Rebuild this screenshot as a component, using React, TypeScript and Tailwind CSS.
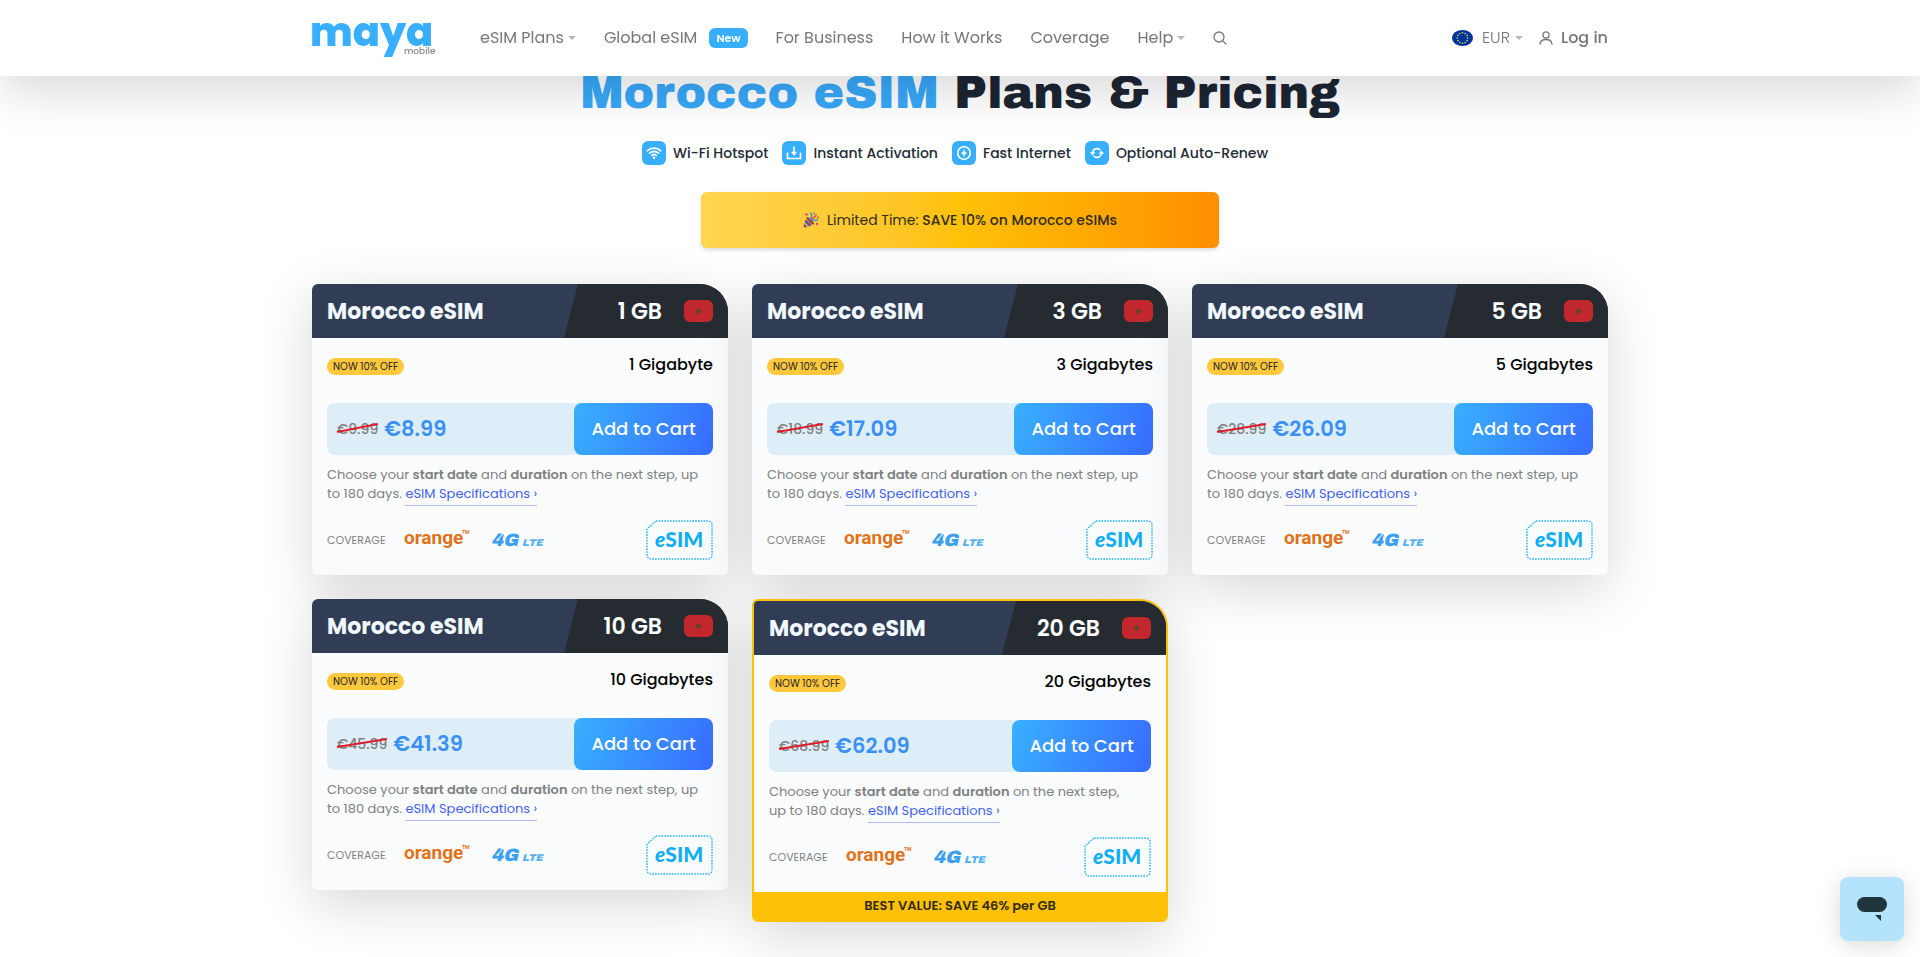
import type { ReactNode } from "react";

type Plan = {
  size: string;
  amount: string;
  oldPrice: string;
  price: string;
  best?: string;
};

const plans: Plan[] = [
  { size: "1 GB", amount: "1 Gigabyte", oldPrice: "€9.99", price: "€8.99" },
  { size: "3 GB", amount: "3 Gigabytes", oldPrice: "€18.99", price: "€17.09" },
  { size: "5 GB", amount: "5 Gigabytes", oldPrice: "€28.99", price: "€26.09" },
  { size: "10 GB", amount: "10 Gigabytes", oldPrice: "€45.99", price: "€41.39" },
  {
    size: "20 GB",
    amount: "20 Gigabytes",
    oldPrice: "€68.99",
    price: "€62.09",
    best: "BEST VALUE: SAVE 46% per GB",
  },
];

function Caret() {
  return (
    <svg width="8" height="4" viewBox="0 0 8 4" className="fill-[#b5b5b5]" aria-hidden="true">
      <path d="M0 0h8L4 4z" />
    </svg>
  );
}

function Logo() {
  return (
    <a href="#" className="block shrink-0" aria-label="Maya Mobile">
      <svg width="120" height="44" viewBox="0 0 120 44" className="overflow-visible">
        <text x="-2" y="30" fontSize="40" fontWeight="800" fill="#38aeff">
          maya
        </text>
        <text x="92" y="38" fontSize="9" fontWeight="500" fill="#8a8a8a">
          mobile
        </text>
      </svg>
    </a>
  );
}

function EuFlag() {
  const stars = Array.from({ length: 12 }, (_, i) => (i * Math.PI) / 6);

  return (
    <svg width="21" height="16" viewBox="0 0 21 16" aria-hidden="true">
      <ellipse cx="10.5" cy="8" rx="10.5" ry="8" fill="#003399" />
      {stars.map((a) => (
        <circle key={a} cx={10.5 + 5.2 * Math.sin(a)} cy={8 - 5.2 * Math.cos(a)} r="0.8" fill="#e9dc5a" />
      ))}
    </svg>
  );
}

function Header() {
  return (
    <header className="fixed inset-x-0 top-0 z-10 bg-white shadow-[0_16px_48px_rgba(0,0,0,0.15)]">
      <div className="mx-auto flex h-[76px] max-w-[1296px] items-center text-base text-[#777]">
        <Logo />
        <nav className="ml-12 flex items-center gap-7 whitespace-nowrap">
          <a href="#" className="flex items-center gap-1">
            eSIM Plans <Caret />
          </a>
          <a href="#" className="flex items-center gap-3">
            Global eSIM
            <span className="rounded-md bg-[#38aeff] px-[7px] text-[11px] leading-5 font-semibold text-white">New</span>
          </a>
          <a href="#">For Business</a>
          <a href="#">How it Works</a>
          <a href="#">Coverage</a>
          <a href="#" className="flex items-center gap-1">
            Help <Caret />
          </a>
          <button type="button" aria-label="Search">
            <svg width="14" height="14" viewBox="0 0 14 14" fill="none" stroke="currentColor" strokeWidth="1.3">
              <circle cx="6" cy="6" r="5" />
              <path d="M9.6 9.6L13 13" strokeLinecap="round" />
            </svg>
          </button>
        </nav>
        <div className="ml-auto flex items-center gap-4 whitespace-nowrap">
          <button type="button" className="flex items-center gap-[5px]">
            <EuFlag />
            <span className="ml-1 font-light">EUR</span>
            <Caret />
          </button>
          <a href="#" className="flex items-center gap-2 font-medium">
            <svg width="14" height="14" viewBox="0 0 14 14" fill="none" stroke="currentColor" strokeWidth="1.3">
              <circle cx="7" cy="4" r="3.1" />
              <path d="M1 13.2c.3-3 2.700-4.700 6-4.700s5.700 1.700 6 4.700" strokeLinecap="round" />
            </svg>
            Log in
          </a>
        </div>
      </div>
    </header>
  );
}

function Feature({ label, children }: { label: string; children: ReactNode }) {
  return (
    <li className="flex items-center gap-[7px]">
      <span className="rounded-md bg-[#38aeff] p-1">
        <svg
          width="16"
          height="16"
          viewBox="0 0 16 16"
          fill="none"
          stroke="#fff"
          strokeWidth="1.6"
          strokeLinecap="round"
          aria-hidden="true"
        >
          {children}
        </svg>
      </span>
      {label}
    </li>
  );
}

function Features() {
  return (
    <ul className="mt-5 flex flex-wrap justify-center gap-x-[14px] gap-y-2 pr-[10px] text-sm leading-6 font-medium text-[#212a35]">
      <Feature label="Wi-Fi Hotspot">
        <path d="M1.200 5.800c3.800-3.600 9.800-3.600 13.600 0M3.500 8.200c2.500-2.400 6.500-2.400 9 0M5.800 10.500c1.200-1.200 3.200-1.200 4.400 0" />
        <circle cx="8" cy="12.800" r="1.300" fill="#fff" stroke="none" />
      </Feature>
      <Feature label="Instant Activation">
        <path d="M1.500 8v5.500h13V8" />
        <path d="M8 2v7" />
        <path d="M4.800 6.800h6.400L8 10.800z" fill="#fff" stroke="none" />
      </Feature>
      <Feature label="Fast Internet">
        <circle cx="8" cy="8" r="6.300" />
        <path d="M8.800 3.800L5 9h2.400l-.4 3.400L11 7.200H8.500z" fill="#fff" stroke="none" />
      </Feature>
      <Feature label="Optional Auto-Renew">
        <path d="M3.600 8A4.400 4.400 0 0 1 10.800 4.700M12.400 8A4.400 4.400 0 0 1 5.200 11.300" />
        <path d="M.9 7.300h5.400L3.600 10.600zM9.700 8.700h5.400L12.400 5.400z" fill="#fff" stroke="none" />
      </Feature>
    </ul>
  );
}

function PartyPopper() {
  return (
    <svg width="16" height="16" viewBox="0 0 16 16" aria-hidden="true">
      <path d="M3.500 5l7.500 7.500L1.600 15.700C.8 16 0 15.200.3 14.400z" fill="#f0a63a" />
      <path d="M2.700 7.600l5.800 5.700-2.400.9-4.400-4.300zM1.200 11.900l2.900 2.900-2 .7L.6 13.800z" fill="#5b4bb0" />
      <ellipse cx="7.300" cy="8.800" rx="1.700" ry="5" transform="rotate(-45 7.300 8.800)" fill="#8a5a3e" />
      <path d="M7 7.500c2-1 1.800-4 .8-7M9 9.500c1-2.300 3.500-1.800 6.200-1.200" fill="none" stroke="#3f8fe0" strokeWidth="1.500" />
      <path d="M8.500 8c1-3 3-1.500 5-5.500" fill="none" stroke="#e0475a" strokeWidth="1.500" />
      <circle cx="3.500" cy="2.500" r="1.200" fill="#e0475a" />
      <circle cx="14" cy="12" r="1.200" fill="#d8448e" />
      <circle cx="11.200" cy="1.500" r="1.100" fill="#3fa9a0" />
      <circle cx="14.800" cy="5.500" r="1" fill="#e0475a" />
    </svg>
  );
}

function MoroccoFlag() {
  return (
    <svg width="29" height="22" viewBox="0 0 29 22" role="img" aria-label="Morocco">
      <rect width="29" height="22" rx="6" fill="#c1272d" />
      <path d="M14.500 7.500l.9 2.600h2.700l-2.200 1.600.8 2.600-2.200-1.600-2.200 1.600.8-2.600-2.200-1.600h2.700z" fill="#4f4a24" />
    </svg>
  );
}

function OrangeLogo() {
  return (
    <svg width="66" height="24" viewBox="0 0 66 24" className="overflow-visible font-['Roboto',sans-serif] font-bold">
      <text x="0" y="16" fontSize="19" fill="#e0731a">
        orange
      </text>
      <text x="58" y="6" fontSize="5" fill="#e0731a">
        TM
      </text>
    </svg>
  );
}

function LteLogo() {
  return (
    <svg
      width="54"
      height="16"
      viewBox="0 0 54 16"
      className="overflow-visible font-['Archivo_Black','DejaVu_Sans',sans-serif] italic"
    >
      <text x="1" y="14" fontSize="18" fill="#3d9fee">
        4G
      </text>
      <text x="32" y="14" fontSize="10" fill="#55b0f4">
        LTE
      </text>
    </svg>
  );
}

function EsimLogo() {
  return (
    <svg width="67" height="40" viewBox="0 0 67 40" className="font-['Lato',sans-serif]">
      <path
        d="M10 1h52a4 4 0 0 1 4 4v30a4 4 0 0 1-4 4H5a4 4 0 0 1-4-4V9z"
        fill="none"
        stroke="#25b2f5"
        strokeWidth="1.400"
        strokeDasharray="1.600 1.200"
      />
      <text x="9" y="27" fontSize="21" fontWeight="900" fill="#0fadf5">
        <tspan fontStyle="italic">e</tspan>SIM
      </text>
    </svg>
  );
}

function PlanCard({ plan }: { plan: Plan }) {
  return (
    <article
      className={`overflow-hidden rounded-md rounded-tr-[28px] bg-[#fafcfe] shadow-[0_14px_56px_rgba(0,0,0,0.16)] ${
        plan.best ? "border-2 border-[#ffc107]" : ""
      }`}
    >
      <div className="relative flex h-[54px] items-center justify-between bg-[#303d55] px-[15px] text-[22px] font-bold">
        <svg className="absolute inset-y-0 right-0 h-full w-[164px]" viewBox="0 0 164 54" preserveAspectRatio="none">
          <path d="M14 0h150v54H0z" fill="#262b32" />
        </svg>
        <h2 className="text-[#f1f8ff]">Morocco eSIM</h2>
        <div className="relative flex items-center gap-[22px] font-semibold text-white">
          {plan.size}
          <MoroccoFlag />
        </div>
      </div>
      <div className="px-[15px] pt-4 pb-[15px]">
        <div className="flex items-start justify-between">
          <span className="mt-1 rounded-full bg-[#ffc83d] px-[6px] text-[10px] leading-[17px] text-[#212529]">
            NOW 10% OFF
          </span>
          <p className="text-base leading-[22px] font-medium text-black">{plan.amount}</p>
        </div>
        <div className="mt-[27px] flex h-[52px] items-center rounded-lg bg-[#deeef8] pl-[10px]">
          <span className="relative text-sm font-medium text-[#808080]">
            <s className="no-underline">{plan.oldPrice}</s>
            <svg
              className="absolute inset-0 h-full w-full"
              viewBox="0 0 42 20"
              preserveAspectRatio="none"
              aria-hidden="true"
            >
              <path d="M0 13L42 5" stroke="#e01b2a" strokeWidth="2" />
            </svg>
          </span>
          <strong className="ml-[6px] text-[21px] font-semibold text-[#3a90f5]">{plan.price}</strong>
          <button
            type="button"
            className="ml-auto h-full w-[139px] cursor-pointer rounded-lg bg-linear-[110deg] from-[#38b0ff] to-[#386cff] text-lg font-medium text-white"
          >
            Add to Cart
          </button>
        </div>
        <p className="mt-[10px] pr-[14px] text-[13px] leading-[19px] text-[#808080]">
          Choose your <b className="font-semibold">start date</b> and <b className="font-semibold">duration</b> on the
          next step, up to 180 days.{" "}
          <a href="#" className="border-b border-[#b3b5f0] pb-[2px] text-[#4361ee]">
            eSIM Specifications ›
          </a>
        </p>
        <div className="mt-[17px] flex items-center">
          <span className="text-[11px] text-[#808080]">COVERAGE</span>
          <span className="ml-[18px]">
            <OrangeLogo />
          </span>
          <span className="ml-5">
            <LteLogo />
          </span>
          <span className="ml-auto">
            <EsimLogo />
          </span>
        </div>
      </div>
      {plan.best && (
        <p className="bg-[#ffc107] text-center text-[13px] leading-[28px] font-semibold text-[#332d10]">{plan.best}</p>
      )}
    </article>
  );
}

export default function App() {
  return (
    <div className="min-h-screen overflow-hidden bg-white font-['Poppins','Inter',sans-serif]">
      <Header />
      <main className="mx-auto max-w-[1296px] pt-[65px] pb-9">
        <h1 className="text-center font-['Archivo_Black','Inter',sans-serif] text-[46px] leading-[56px] font-normal text-[#1c2533]">
          <span className="text-[#38a8f8]">Morocco eSIM</span> Plans &amp; Pricing
        </h1>
        <Features />
        <div className="mx-auto mt-[27px] flex h-14 max-w-[518px] items-center justify-center gap-2 rounded-md bg-linear-to-r from-[#ffd54f] via-[#ffc107] to-[#ff8f00] text-sm text-[#2f2c1d] shadow-[0_2px_4px_rgba(0,0,0,0.15)]">
          <PartyPopper />
          <p>
            Limited Time: <b className="font-medium">SAVE 10% on Morocco eSIMs</b>
          </p>
        </div>
        <section className="mt-9 grid grid-cols-1 items-start gap-6 md:grid-cols-2 xl:grid-cols-3">
          {plans.map((plan) => (
            <PlanCard key={plan.size} plan={plan} />
          ))}
        </section>
      </main>
      <button
        type="button"
        aria-label="Open chat"
        className="fixed right-4 bottom-4 flex h-16 w-16 items-center justify-center rounded-lg bg-[#b3e4fc] shadow-[0_4px_24px_rgba(0,0,0,0.15)]"
      >
        <svg width="30" height="24" viewBox="0 0 30 24" fill="#20363f">
          <rect width="30" height="15" rx="7.500" />
          <path d="M18 18h6v6z" />
        </svg>
      </button>
    </div>
  );
}
